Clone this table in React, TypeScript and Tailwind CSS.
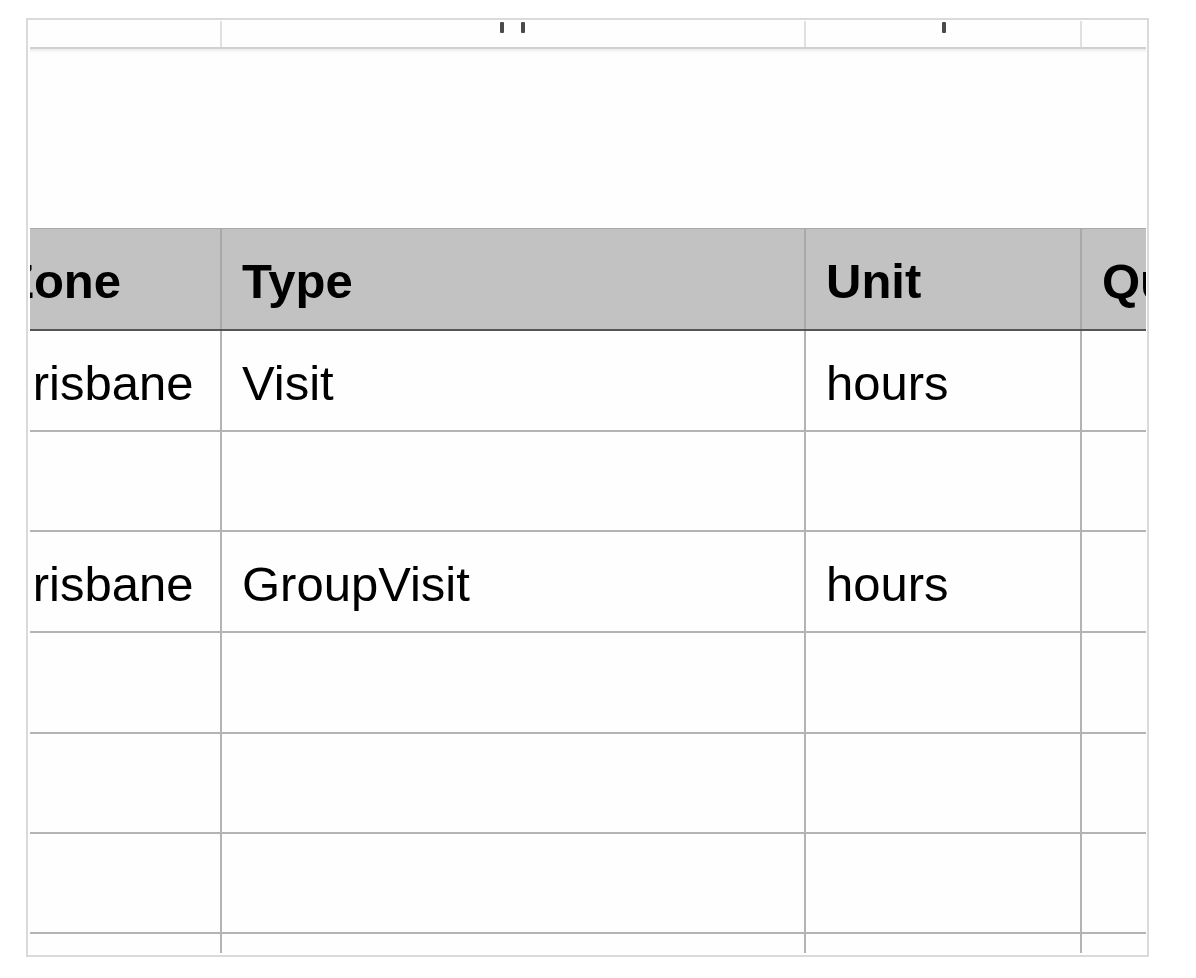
import React from "react";

const font = { fontFamily: '"Liberation Sans", Arial, Helvetica, sans-serif' };

function BodyRow({ h, cells }: { h: string; cells: string[] }) {
  return (
    <div className={`flex ${h} border-b-2 border-[#b3b3b3]`}>
      <div className="w-[242px] shrink-0 border-r-2 border-[#b3b3b3] flex items-center pl-[20px] pt-[5px] text-[49px] leading-none text-black">
        {cells[0]}
      </div>
      <div className="w-[584px] shrink-0 border-r-2 border-[#b3b3b3] flex items-center pl-[20px] pt-[5px] text-[49px] leading-none text-black">
        {cells[1]}
      </div>
      <div className="w-[276px] shrink-0 border-r-2 border-[#b3b3b3] flex items-center pl-[20px] pt-[5px] text-[49px] leading-none text-black">
        {cells[2]}
      </div>
      <div className="w-[250px] shrink-0 flex items-center pl-[20px] pt-[5px] text-[49px] leading-none text-black">
        {cells[3]}
      </div>
    </div>
  );
}

export default function App() {
  return (
    <div className="min-h-[978px] bg-white pl-[26px] pt-[18px]" style={font}>
      <div className="w-[1123px] h-[939px] border-2 border-[#dadada] pl-[2px] pt-px pr-px pb-[2px] bg-white">
        <div className="w-full h-full overflow-hidden bg-[#fefefe]">
          <div className="ml-[-50px] w-max flex flex-col">
            {/* top partially visible row */}
            <div className="flex h-[28px] border-b-2 border-[#d0d0d0] shadow-[0_2px_3px_rgba(0,0,0,0.08)] relative">
              <div className="w-[242px] shrink-0 border-r-2 border-[#e0e0e0]" />
              <div className="w-[584px] shrink-0 border-r-2 border-[#e0e0e0] flex items-start pt-px pl-[278px] gap-[17px]">
                <div className="w-[4px] h-[11px] bg-[#4a4a4a] rounded-[1px]" />
                <div className="w-[4px] h-[11px] bg-[#4a4a4a] rounded-[1px]" />
              </div>
              <div className="w-[276px] shrink-0 border-r-2 border-[#e0e0e0] flex items-start pt-px pl-[136px]">
                <div className="w-[4px] h-[11px] bg-[#4a4a4a] rounded-[1px]" />
              </div>
              <div className="w-[250px] shrink-0" />
            </div>
            {/* blank gap */}
            <div className="h-[179px]" />
            {/* header */}
            <div className="flex h-[103px] border-t border-[#a9a9a9] border-b-2 border-b-[#555555] bg-[#c1c2c1]">
              <div className="w-[242px] shrink-0 border-r-2 border-[#a8a9a8] flex items-center pl-[24px] pt-[4px] text-[49px] leading-none font-bold text-black">
                Zone
              </div>
              <div className="w-[584px] shrink-0 border-r-2 border-[#a8a9a8] flex items-center pl-[20px] pt-[4px] text-[49px] leading-none font-bold text-black">
                Type
              </div>
              <div className="w-[276px] shrink-0 border-r-2 border-[#a8a9a8] flex items-center pl-[20px] pt-[4px] text-[49px] leading-none font-bold text-black">
                Unit
              </div>
              <div className="w-[250px] shrink-0 flex items-center pl-[20px] pt-[4px] text-[49px] leading-none font-bold text-black">
                Quantity
              </div>
            </div>
            <BodyRow h="h-[101px]" cells={["Brisbane", "Visit", "hours", ""]} />
            <BodyRow h="h-[100px]" cells={["", "", "", ""]} />
            <BodyRow h="h-[101px]" cells={["Brisbane", "GroupVisit", "hours", ""]} />
            <BodyRow h="h-[101px]" cells={["", "", "", ""]} />
            <BodyRow h="h-[100px]" cells={["", "", "", ""]} />
            <BodyRow h="h-[100px]" cells={["", "", "", ""]} />
            <BodyRow h="h-[100px]" cells={["", "", "", ""]} />
          </div>
        </div>
      </div>
    </div>
  );
}
